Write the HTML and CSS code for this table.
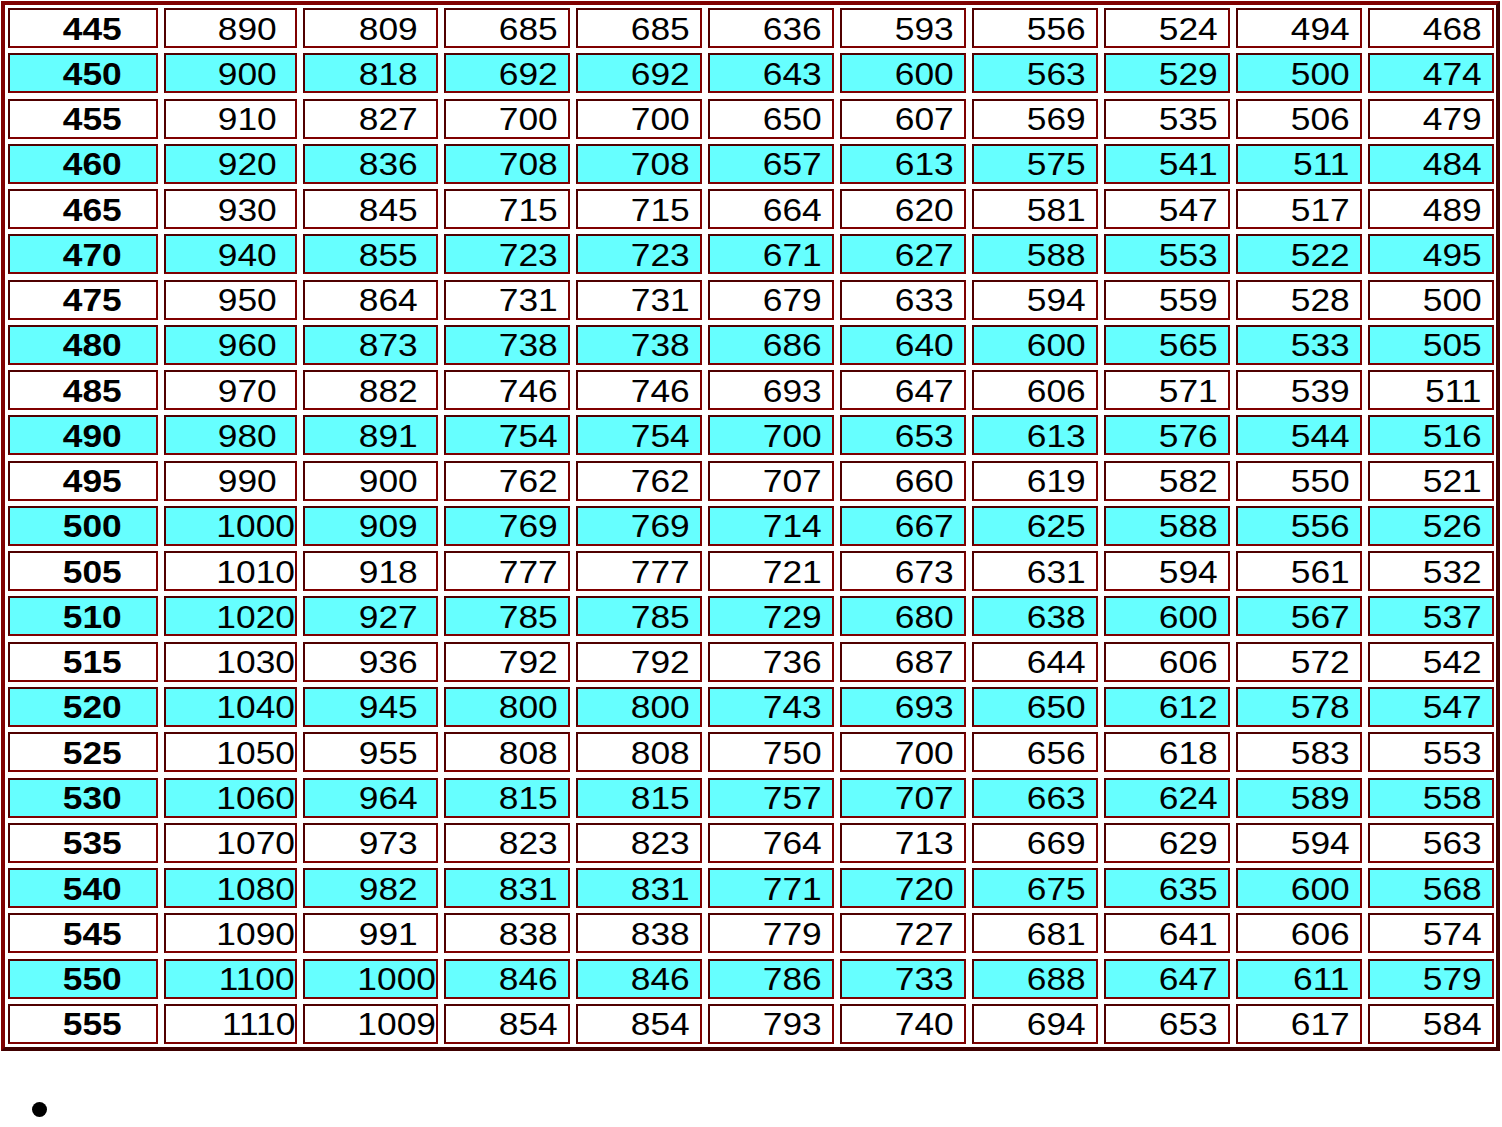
FILE: index.html
```html
<!DOCTYPE html>
<html>
<head>
<meta charset="utf-8">
<title>Table</title>
<link rel="stylesheet" href="styles.css">
</head>
<body>
<div class="grid">
<div class="row"><div class="h"><span>445</span></div><div class="m"><span>890</span></div><div class="m"><span>809</span></div><div><span>685</span></div><div><span>685</span></div><div><span>636</span></div><div><span>593</span></div><div><span>556</span></div><div><span>524</span></div><div><span>494</span></div><div><span>468</span></div></div>
<div class="row alt"><div class="h"><span>450</span></div><div class="m"><span>900</span></div><div class="m"><span>818</span></div><div><span>692</span></div><div><span>692</span></div><div><span>643</span></div><div><span>600</span></div><div><span>563</span></div><div><span>529</span></div><div><span>500</span></div><div><span>474</span></div></div>
<div class="row"><div class="h"><span>455</span></div><div class="m"><span>910</span></div><div class="m"><span>827</span></div><div><span>700</span></div><div><span>700</span></div><div><span>650</span></div><div><span>607</span></div><div><span>569</span></div><div><span>535</span></div><div><span>506</span></div><div><span>479</span></div></div>
<div class="row alt"><div class="h"><span>460</span></div><div class="m"><span>920</span></div><div class="m"><span>836</span></div><div><span>708</span></div><div><span>708</span></div><div><span>657</span></div><div><span>613</span></div><div><span>575</span></div><div><span>541</span></div><div><span>511</span></div><div><span>484</span></div></div>
<div class="row"><div class="h"><span>465</span></div><div class="m"><span>930</span></div><div class="m"><span>845</span></div><div><span>715</span></div><div><span>715</span></div><div><span>664</span></div><div><span>620</span></div><div><span>581</span></div><div><span>547</span></div><div><span>517</span></div><div><span>489</span></div></div>
<div class="row alt"><div class="h"><span>470</span></div><div class="m"><span>940</span></div><div class="m"><span>855</span></div><div><span>723</span></div><div><span>723</span></div><div><span>671</span></div><div><span>627</span></div><div><span>588</span></div><div><span>553</span></div><div><span>522</span></div><div><span>495</span></div></div>
<div class="row"><div class="h"><span>475</span></div><div class="m"><span>950</span></div><div class="m"><span>864</span></div><div><span>731</span></div><div><span>731</span></div><div><span>679</span></div><div><span>633</span></div><div><span>594</span></div><div><span>559</span></div><div><span>528</span></div><div><span>500</span></div></div>
<div class="row alt"><div class="h"><span>480</span></div><div class="m"><span>960</span></div><div class="m"><span>873</span></div><div><span>738</span></div><div><span>738</span></div><div><span>686</span></div><div><span>640</span></div><div><span>600</span></div><div><span>565</span></div><div><span>533</span></div><div><span>505</span></div></div>
<div class="row"><div class="h"><span>485</span></div><div class="m"><span>970</span></div><div class="m"><span>882</span></div><div><span>746</span></div><div><span>746</span></div><div><span>693</span></div><div><span>647</span></div><div><span>606</span></div><div><span>571</span></div><div><span>539</span></div><div><span>511</span></div></div>
<div class="row alt"><div class="h"><span>490</span></div><div class="m"><span>980</span></div><div class="m"><span>891</span></div><div><span>754</span></div><div><span>754</span></div><div><span>700</span></div><div><span>653</span></div><div><span>613</span></div><div><span>576</span></div><div><span>544</span></div><div><span>516</span></div></div>
<div class="row"><div class="h"><span>495</span></div><div class="m"><span>990</span></div><div class="m"><span>900</span></div><div><span>762</span></div><div><span>762</span></div><div><span>707</span></div><div><span>660</span></div><div><span>619</span></div><div><span>582</span></div><div><span>550</span></div><div><span>521</span></div></div>
<div class="row alt"><div class="h"><span>500</span></div><div class="w"><span>1000</span></div><div class="m"><span>909</span></div><div><span>769</span></div><div><span>769</span></div><div><span>714</span></div><div><span>667</span></div><div><span>625</span></div><div><span>588</span></div><div><span>556</span></div><div><span>526</span></div></div>
<div class="row"><div class="h"><span>505</span></div><div class="w"><span>1010</span></div><div class="m"><span>918</span></div><div><span>777</span></div><div><span>777</span></div><div><span>721</span></div><div><span>673</span></div><div><span>631</span></div><div><span>594</span></div><div><span>561</span></div><div><span>532</span></div></div>
<div class="row alt"><div class="h"><span>510</span></div><div class="w"><span>1020</span></div><div class="m"><span>927</span></div><div><span>785</span></div><div><span>785</span></div><div><span>729</span></div><div><span>680</span></div><div><span>638</span></div><div><span>600</span></div><div><span>567</span></div><div><span>537</span></div></div>
<div class="row"><div class="h"><span>515</span></div><div class="w"><span>1030</span></div><div class="m"><span>936</span></div><div><span>792</span></div><div><span>792</span></div><div><span>736</span></div><div><span>687</span></div><div><span>644</span></div><div><span>606</span></div><div><span>572</span></div><div><span>542</span></div></div>
<div class="row alt"><div class="h"><span>520</span></div><div class="w"><span>1040</span></div><div class="m"><span>945</span></div><div><span>800</span></div><div><span>800</span></div><div><span>743</span></div><div><span>693</span></div><div><span>650</span></div><div><span>612</span></div><div><span>578</span></div><div><span>547</span></div></div>
<div class="row"><div class="h"><span>525</span></div><div class="w"><span>1050</span></div><div class="m"><span>955</span></div><div><span>808</span></div><div><span>808</span></div><div><span>750</span></div><div><span>700</span></div><div><span>656</span></div><div><span>618</span></div><div><span>583</span></div><div><span>553</span></div></div>
<div class="row alt"><div class="h"><span>530</span></div><div class="w"><span>1060</span></div><div class="m"><span>964</span></div><div><span>815</span></div><div><span>815</span></div><div><span>757</span></div><div><span>707</span></div><div><span>663</span></div><div><span>624</span></div><div><span>589</span></div><div><span>558</span></div></div>
<div class="row"><div class="h"><span>535</span></div><div class="w"><span>1070</span></div><div class="m"><span>973</span></div><div><span>823</span></div><div><span>823</span></div><div><span>764</span></div><div><span>713</span></div><div><span>669</span></div><div><span>629</span></div><div><span>594</span></div><div><span>563</span></div></div>
<div class="row alt"><div class="h"><span>540</span></div><div class="w"><span>1080</span></div><div class="m"><span>982</span></div><div><span>831</span></div><div><span>831</span></div><div><span>771</span></div><div><span>720</span></div><div><span>675</span></div><div><span>635</span></div><div><span>600</span></div><div><span>568</span></div></div>
<div class="row"><div class="h"><span>545</span></div><div class="w"><span>1090</span></div><div class="m"><span>991</span></div><div><span>838</span></div><div><span>838</span></div><div><span>779</span></div><div><span>727</span></div><div><span>681</span></div><div><span>641</span></div><div><span>606</span></div><div><span>574</span></div></div>
<div class="row alt"><div class="h"><span>550</span></div><div class="w"><span>1100</span></div><div class="w"><span>1000</span></div><div><span>846</span></div><div><span>846</span></div><div><span>786</span></div><div><span>733</span></div><div><span>688</span></div><div><span>647</span></div><div><span>611</span></div><div><span>579</span></div></div>
<div class="row"><div class="h"><span>555</span></div><div class="w"><span>1110</span></div><div class="w"><span>1009</span></div><div><span>854</span></div><div><span>854</span></div><div><span>793</span></div><div><span>740</span></div><div><span>694</span></div><div><span>653</span></div><div><span>617</span></div><div><span>584</span></div></div>
</div>
<ul class="list">
<li></li>
</ul>
</body>
</html>
```
FILE: styles.css
```css
html, body {
  margin: 0;
  padding: 0;
  background: #ffffff;
}

body {
  font-family: "Liberation Sans", Arial, sans-serif;
  color: #000000;
}

.grid {
  display: grid;
  width: max-content;
  grid-template-columns: 150px 133px 135px repeat(8, 126px);
  grid-auto-rows: 40px;
  column-gap: 6px;
  row-gap: 5.27px;
  margin: 1px 0 0 1px;
  padding: 3px 2px 3px 3px;
  border: 4px solid;
  border-color: #800000 #400000 #400000 #800000;
}

.row {
  display: contents;
}

.row > div {
  display: flex;
  align-items: center;
  justify-content: flex-end;
  padding-top: 2px;
  padding-right: 10.5px;
  border: 2px solid;
  border-color: #500000 #800000 #800000 #500000;
  background: #ffffff;
  font-size: 31px;
  line-height: 1;
  white-space: nowrap;
}

.row.alt > div {
  background: #66ffff;
}

.row > div > span {
  display: inline-block;
  transform: scaleX(1.14);
  transform-origin: right center;
}

.row > .h {
  font-weight: bold;
  padding-right: 34.5px;
}

.row > .m {
  padding-right: 18.5px;
}

.row > .w {
  padding-right: 0;
}

.list {
  margin: 29px 0 0 0;
  padding-left: 69px;
  font-size: 50px;
  line-height: 1.15;
}
```
